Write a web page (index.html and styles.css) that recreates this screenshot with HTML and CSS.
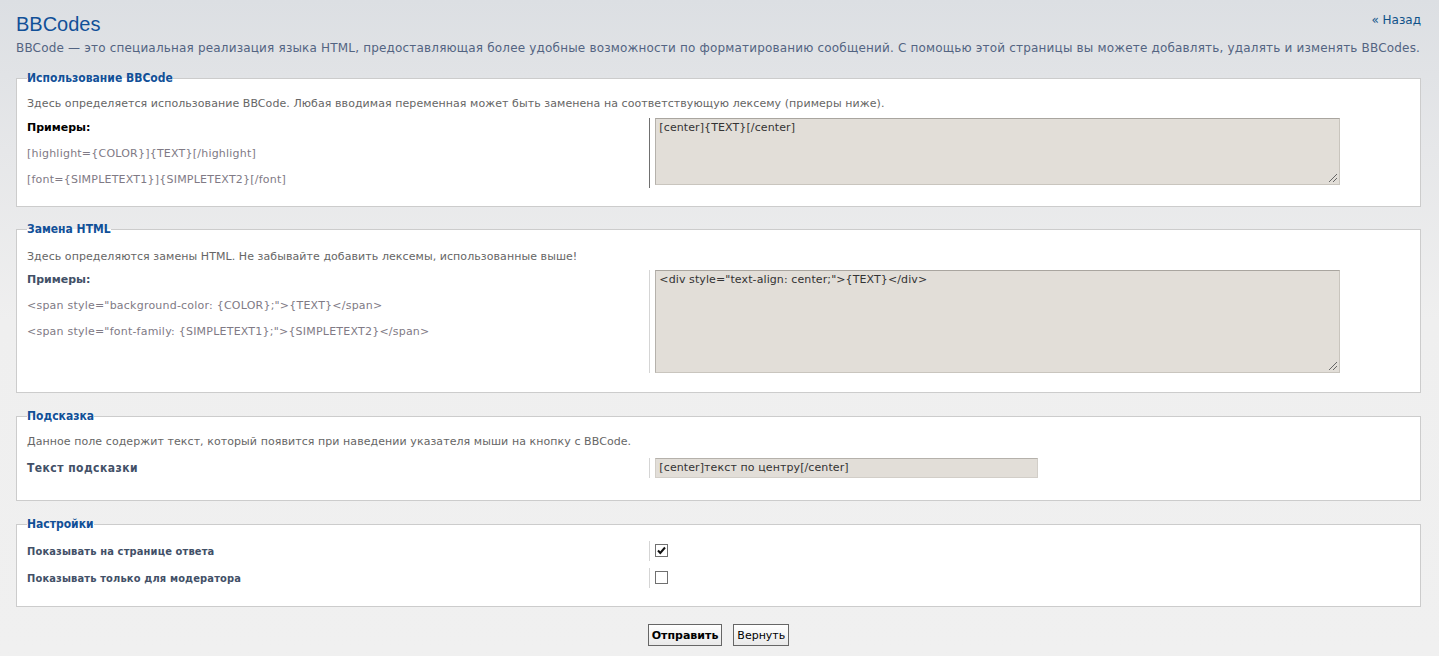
FILE: index.html
```html
<!DOCTYPE html>
<html lang="ru">
<head>
<meta charset="utf-8">
<title>BBCodes</title>
<link rel="stylesheet" href="styles.css">
</head>
<body>
<div class="page">
  <div class="head">
    <h1 class="title">BBCodes</h1>
    <a class="back" href="#">« Назад</a>
  </div>
  <p class="intro">BBCode — это специальная реализация языка HTML, предоставляющая более удобные возможности по форматированию сообщений. С помощью этой страницы вы можете добавлять, удалять и изменять BBCodes.</p>

  <form class="form">
    <fieldset class="box box-usage">
      <legend class="legend">Использование BBCode</legend>
      <p class="explain">Здесь определяется использование BBCode. Любая вводимая переменная может быть заменена на соответствующую лексему (примеры ниже).</p>
      <div class="row">
        <div class="dt">
          <div class="ex-title ex-title-dark">Примеры:</div>
          <div class="ex">[highlight={COLOR}]{TEXT}[/highlight]</div>
          <div class="ex">[font={SIMPLETEXT1}]{SIMPLETEXT2}[/font]</div>
        </div>
        <div class="dd dd-dark">
          <div class="area area-small">[center]{TEXT}[/center]<span class="grip"></span></div>
        </div>
      </div>
    </fieldset>

    <fieldset class="box box-html">
      <legend class="legend">Замена HTML</legend>
      <p class="explain">Здесь определяются замены HTML. Не забывайте добавить лексемы, использованные выше!</p>
      <div class="row">
        <div class="dt">
          <div class="ex-title">Примеры:</div>
          <div class="ex">&lt;span style="background-color: {COLOR};"&gt;{TEXT}&lt;/span&gt;</div>
          <div class="ex">&lt;span style="font-family: {SIMPLETEXT1};"&gt;{SIMPLETEXT2}&lt;/span&gt;</div>
        </div>
        <div class="dd">
          <div class="area area-big">&lt;div style="text-align: center;"&gt;{TEXT}&lt;/div&gt;<span class="grip"></span></div>
        </div>
      </div>
    </fieldset>

    <fieldset class="box box-hint">
      <legend class="legend">Подсказка</legend>
      <p class="explain">Данное поле содержит текст, который появится при наведении указателя мыши на кнопку с BBCode.</p>
      <div class="row row-single">
        <div class="dt"><span class="label label-hint">Текст подсказки</span></div>
        <div class="dd">
          <div class="input">[center]текст по центру[/center]</div>
        </div>
      </div>
    </fieldset>

    <fieldset class="box box-settings">
      <legend class="legend">Настройки</legend>
      <div class="row row-check">
        <div class="dt"><span class="label">Показывать на странице ответа</span></div>
        <div class="dd">
          <span class="check">
            <svg class="tick" width="11" height="11" viewBox="0 0 11 11"><path d="M2 5.5 L4.3 8 L9 2.5" fill="none" stroke="#111" stroke-width="2"/></svg>
          </span>
        </div>
      </div>
      <div class="row row-check">
        <div class="dt"><span class="label">Показывать только для модератора</span></div>
        <div class="dd"><span class="check"></span></div>
      </div>
    </fieldset>

    <div class="buttons">
      <button type="button" class="btn btn-main">Отправить</button>
      <button type="button" class="btn">Вернуть</button>
    </div>
  </form>
</div>
</body>
</html>
```
FILE: styles.css
```css
html, body {
  margin: 0;
  padding: 0;
}
body {
  background: linear-gradient(#dcdfe3 0px, #e6e7e9 150px, #efefef 320px, #f0f0f0 100%);
  min-height: 656px;
  font-family: "DejaVu Sans", Verdana, sans-serif;
  font-size: 11px;
  color: #536482;
}
.page {
  padding: 0 18px 0 16px;
}
.head {
  display: flex;
  justify-content: space-between;
  align-items: flex-start;
}
.title {
  margin: 12px 0 0 0;
  font-family: "Liberation Sans", Arial, sans-serif;
  font-weight: normal;
  font-size: 20px;
  line-height: 24px;
  color: #115098;
}
.back {
  margin-top: 13px;
  font-size: 12px;
  line-height: 14px;
  color: #105289;
  text-decoration: none;
}
.intro {
  margin: 4px 0 0 0;
  font-size: 12px;
  line-height: 16px;
  letter-spacing: 0.18px;
  color: #536482;
  white-space: nowrap;
}
.form {
  margin-top: 15px;
}
.box {
  margin: 0 0 16px 0;
  padding: 0 10px 0 10px;
  border: 1px solid #cccccc;
  background: #ffffff;
  min-width: 0;
}
.legend {
  padding: 0;
  font-family: "DejaVu Sans Condensed", Tahoma, sans-serif;
  font-weight: bold;
  font-size: 12px;
  line-height: 14px;
  color: #115098;
}
.explain {
  margin: 11px 0 0 0;
  line-height: 16px;
  letter-spacing: 0.07px;
  color: #666666;
}
.row {
  display: flex;
  margin-top: 6px;
}
.dt {
  width: 45%;
  flex: none;
}
.dd {
  flex: 1;
  border-left: 1px solid #d5d5d5;
  padding-left: 5px;
}
.dd-dark {
  border-left-color: #707070;
}
.ex-title {
  font-weight: bold;
  line-height: 16px;
  margin-top: 2px;
  color: #425067;
}
.ex-title-dark {
  color: #000000;
}
.ex {
  margin-top: 10px;
  line-height: 16px;
  letter-spacing: 0.22px;
  color: #807a85;
}
.area {
  position: relative;
  box-sizing: border-box;
  width: 685px;
  padding: 2px 3px;
  background: #e2ded8;
  border: 1px solid #c9c5be;
  border-top-color: #a9a59f;
  border-left-color: #b5b1ab;
  color: #333333;
  line-height: 14px;
  letter-spacing: 0.1px;
}
.area-small {
  height: 67px;
}
.area-big {
  height: 103px;
}
.grip {
  position: absolute;
  right: 2px;
  bottom: 2px;
  width: 8px;
  height: 8px;
  background: linear-gradient(135deg, transparent 45%, #666 45%, #666 55%, transparent 55%, transparent 70%, #666 70%, #666 80%, transparent 80%);
}
.box-usage {
  margin-bottom: 15px;
  padding-bottom: 18px;
}
.box-html .explain {
  margin-top: 13px;
}
.box-html .row {
  margin-top: 5px;
}
.box-html {
  padding-bottom: 19px;
}
.box-hint .row {
  margin-top: 8px;
}
.box-hint {
  padding-bottom: 22px;
}
.label {
  display: block;
  margin-top: 2px;
  font-family: "DejaVu Sans Condensed", Tahoma, sans-serif;
  font-weight: bold;
  font-size: 11px;
  line-height: 16px;
  letter-spacing: 0.15px;
  color: #425067;
}
.label-hint {
  font-size: 12px;
  letter-spacing: 0.45px;
}
.input {
  box-sizing: border-box;
  width: 383px;
  height: 20px;
  padding: 2px 3px;
  background: #e2ded8;
  border: 1px solid #d2cec8;
  border-top-color: #b5b1ab;
  color: #333333;
  line-height: 14px;
  font-size: 11px;
  letter-spacing: 0.1px;
}
.box-settings {
  padding-top: 4px;
  padding-bottom: 17px;
}
.row-check {
  margin-top: 4px;
  height: 23px;
  align-items: center;
}
.row-check .dd {
  height: 20px;
  display: flex;
  align-items: center;
}
.check {
  box-sizing: border-box;
  width: 13px;
  height: 13px;
  border: 1px solid #707070;
  background: #ffffff;
  display: flex;
  align-items: center;
  justify-content: center;
}
.buttons {
  display: flex;
  justify-content: center;
  gap: 11px;
  padding-top: 1px;
}
.btn {
  height: 22px;
  padding: 0 3px;
  font-family: "DejaVu Sans", Verdana, sans-serif;
  font-size: 11px;
  color: #000000;
  border: 1px solid #666666;
  background: linear-gradient(#ffffff, #e9e9e9);
  border-radius: 0;
}
.btn-main {
  font-weight: bold;
}
```
